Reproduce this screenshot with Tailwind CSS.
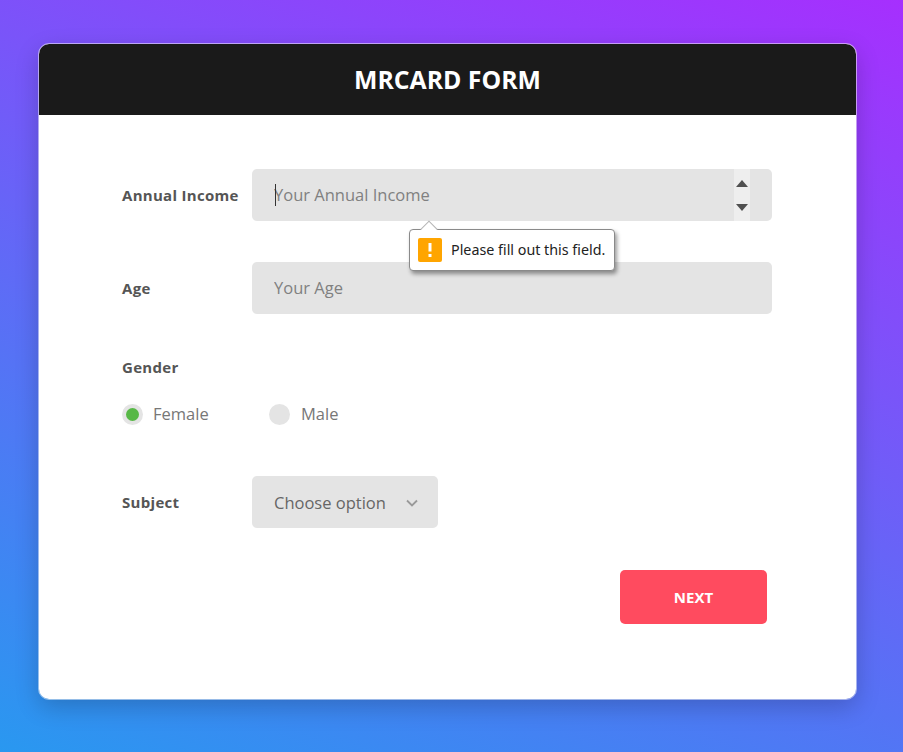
<!DOCTYPE html>
<html lang="en">
  <head>
    <meta charset="UTF-8" />
    <meta name="viewport" content="width=device-width, initial-scale=1.0" />
    <title>MRCARD Form</title>
    <script src="https://cdn.jsdelivr.net/npm/@tailwindcss/browser@4"></script>
  </head>
  <body class="h-[752px] overflow-hidden bg-[linear-gradient(22deg,#2998f0,#a62ffe)] font-['Open_Sans',sans-serif]">
    <div class="pt-[44px] pl-[39px]">
      <div class="w-[817px] h-[655px] bg-white rounded-[10px] overflow-hidden outline outline-white/50 shadow-[0_8px_24px_rgba(0,0,0,0.2)]">
        <!-- Header -->
        <div class="h-[71px] bg-[#1a1a1a] flex items-center justify-center">
          <h1 class="text-white text-[24.8px] font-bold">MRCARD FORM</h1>
        </div>

        <div class="pt-[54px] pl-[83px] pr-[84px]">
          <!-- Annual income -->
          <div class="flex items-center h-[52px] relative">
            <label class="w-[130px] text-[15px] tracking-[0.3px] font-bold text-[#555]">Annual Income</label>
            <div class="relative w-[520px]">
              <input type="text" placeholder="Your Annual Income" class="w-full h-[52px] pb-[2px] bg-[#e4e4e4] rounded-[5px] pl-[22px] text-[16.5px] text-[#555] placeholder:text-[#808080] outline-none" />
              <span class="absolute left-[23px] top-[15px] w-px h-[22px] bg-[#333]"></span>
              <!-- Number spinner -->
              <div class="absolute right-[22px] top-0 w-[16px] h-[52px] bg-[#eeeeee] flex flex-col items-center justify-center gap-[17px]">
                <svg width="12" height="7" viewBox="0 0 12 7"><path d="M6 0 L12 7 H0 Z" fill="#505050" /></svg>
                <svg width="12" height="7" viewBox="0 0 12 7"><path d="M0 0 H12 L6 7 Z" fill="#505050" /></svg>
              </div>
            </div>
            <!-- Validation bubble -->
            <div class="absolute left-[287px] top-[60px] z-10 w-[206px] h-[42px] bg-white border border-[#8a8a8a] rounded-[4px] shadow-[2px_3px_4px_rgba(0,0,0,0.4)] flex items-center pl-[8px]">
              <span class="absolute left-[13px] -top-[7px] w-[12px] h-[12px] bg-white border-l border-t border-[#b5b5b5] rotate-45"></span>
              <span class="w-[24px] h-[24px] bg-[#ffa500] rounded-[2px] flex items-center justify-center">
                <svg width="4" height="14" viewBox="0 0 4 14"><path d="M0.5 0 H3.5 V8.5 H0.5 Z M0.5 11 H3.5 V14 H0.5 Z" fill="#fff" /></svg>
              </span>
              <span class="ml-[9px] text-[14.3px] leading-none text-[#222] font-['Noto_Sans',sans-serif] whitespace-nowrap">Please fill out this field.</span>
            </div>
          </div>

          <!-- Age -->
          <div class="flex items-center mt-[41px]">
            <label class="w-[130px] text-[15px] tracking-[0.3px] font-bold text-[#555]">Age</label>
            <input type="text" placeholder="Your Age" class="w-[520px] h-[52px] pb-[2px] bg-[#e4e4e4] rounded-[5px] pl-[22px] text-[16.5px] placeholder:text-[#808080] outline-none" />
          </div>

          <!-- Gender -->
          <div class="mt-[43px] text-[15px] tracking-[0.3px] leading-[20px] font-bold text-[#555]">Gender</div>
          <div class="flex items-center mt-[27px] h-[20px] text-[16.5px] text-[#777]">
            <span class="w-[21px] h-[21px] rounded-full bg-[#e4e4e4] flex items-center justify-center">
              <span class="w-[13px] h-[13px] rounded-full bg-[#57b846]"></span>
            </span>
            <span class="ml-[10px] w-[116px]">Female</span>
            <span class="w-[21px] h-[21px] rounded-full bg-[#e4e4e4]"></span>
            <span class="ml-[11px]">Male</span>
          </div>

          <!-- Subject -->
          <div class="flex items-center mt-[52px]">
            <label class="w-[130px] text-[15px] tracking-[0.3px] font-bold text-[#555]">Subject</label>
            <div class="w-[186px] h-[52px] pt-[2px] bg-[#e4e4e4] rounded-[5px] pl-[22px] flex items-center text-[16.5px] text-[#666]">
              <span>Choose option</span>
              <svg class="ml-[20px]" width="12" height="8" viewBox="0 0 12 8" fill="none"><path d="M1 1.5 L6 6.5 L11 1.5" stroke="#999" stroke-width="1.8" /></svg>
            </div>
          </div>

          <!-- Next -->
          <div class="flex justify-end mt-[42px] pr-[5px]">
            <button class="w-[147px] h-[54px] bg-[#ff4b5f] rounded-[5px] text-white text-[15px] font-bold">NEXT</button>
          </div>
        </div>
      </div>
    </div>
  </body>
</html>
